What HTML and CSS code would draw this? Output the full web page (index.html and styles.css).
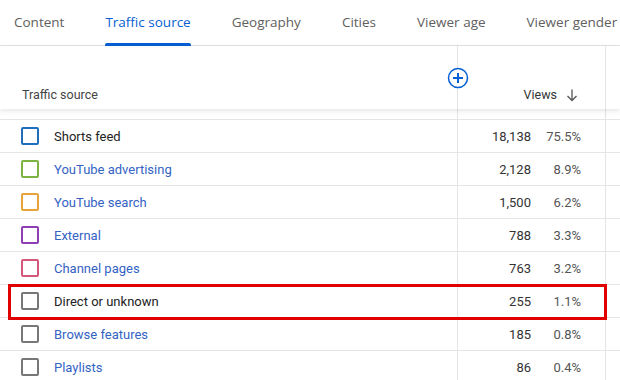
FILE: index.html
```html
<!DOCTYPE html>
<html lang="en">
<head>
    <meta charset="UTF-8">
    <meta name="viewport" content="width=device-width, initial-scale=1.0">
    <title>Traffic source</title>
    <link rel="stylesheet" href="styles.css">
</head>
<body>
    <div class="tabs">
        <div class="tab">Content</div>
        <div class="tab active">Traffic source</div>
        <div class="tab">Geography</div>
        <div class="tab">Cities</div>
        <div class="tab">Viewer age</div>
        <div class="tab">Viewer gender</div>
    </div>

    <div class="table">
        <div class="head">
            <div class="cell name-head">Traffic source</div>
            <div class="cell metric-head">
                <div class="add">
                    <svg width="22" height="22" viewBox="0 0 22 22">
                        <circle cx="11" cy="11" r="9.5" fill="#fff" stroke="#065fd4" stroke-width="1.5"/>
                        <path d="M11 6v10M6 11h10" stroke="#065fd4" stroke-width="2"/>
                    </svg>
                </div>
                <span class="views">Views</span>
                <svg class="sort" width="14" height="14" viewBox="0 0 14 14">
                    <path d="M7 1.5v11M2.5 8l4.5 4.5L11.5 8" fill="none" stroke="#555" stroke-width="1.3"/>
                </svg>
            </div>
            <div class="cell rest"></div>
        </div>
        <div class="spacer">
            <div class="cell"></div>
            <div class="cell"></div>
            <div class="cell rest"></div>
        </div>

        <div class="row">
            <div class="cell name"><span class="box" style="border-color:#1f6fc0"></span><span class="label plain">Shorts feed</span></div>
            <div class="cell metric"><span class="num">18,138</span><span class="pct">75.5%</span></div>
            <div class="cell rest"></div>
        </div>
        <div class="row">
            <div class="cell name"><span class="box" style="border-color:#7cb342"></span><span class="label">YouTube advertising</span></div>
            <div class="cell metric"><span class="num">2,128</span><span class="pct">8.9%</span></div>
            <div class="cell rest"></div>
        </div>
        <div class="row">
            <div class="cell name"><span class="box" style="border-color:#e8a33a"></span><span class="label">YouTube search</span></div>
            <div class="cell metric"><span class="num">1,500</span><span class="pct">6.2%</span></div>
            <div class="cell rest"></div>
        </div>
        <div class="row">
            <div class="cell name"><span class="box" style="border-color:#8e3fb3"></span><span class="label">External</span></div>
            <div class="cell metric"><span class="num">788</span><span class="pct">3.3%</span></div>
            <div class="cell rest"></div>
        </div>
        <div class="row">
            <div class="cell name"><span class="box" style="border-color:#d4587c"></span><span class="label">Channel pages</span></div>
            <div class="cell metric"><span class="num">763</span><span class="pct">3.2%</span></div>
            <div class="cell rest"></div>
        </div>
        <div class="row marked">
            <div class="cell name"><span class="box"></span><span class="label plain">Direct or unknown</span></div>
            <div class="cell metric"><span class="num">255</span><span class="pct">1.1%</span></div>
            <div class="cell rest"></div>
            <div class="highlight"></div>
        </div>
        <div class="row">
            <div class="cell name"><span class="box"></span><span class="label">Browse features</span></div>
            <div class="cell metric"><span class="num">185</span><span class="pct">0.8%</span></div>
            <div class="cell rest"></div>
        </div>
        <div class="row">
            <div class="cell name"><span class="box"></span><span class="label">Playlists</span></div>
            <div class="cell metric"><span class="num">86</span><span class="pct">0.4%</span></div>
            <div class="cell rest"></div>
        </div>
    </div>
</body>
</html>
```

FILE: styles.css
```css
body {
    margin: 0;
    background: #fff;
    font-family: Roboto, "Liberation Sans", Arial, sans-serif;
    overflow: hidden;
}

.tabs {
    display: flex;
    height: 46px;
    padding-left: 14px;
    gap: 41px;
    border-bottom: 1px solid #e3e3e3;
    box-sizing: border-box;
    white-space: nowrap;
}

.tab {
    position: relative;
    font-family: "Open Sans", "Noto Sans", sans-serif;
    font-size: 13.5px;
    color: #606060;
    line-height: 44px;
}

.tab.active {
    color: #065fd4;
}

.tab.active::after {
    content: "";
    position: absolute;
    left: 0;
    right: 0;
    bottom: -1px;
    height: 3px;
    background: #065fd4;
    border-radius: 2px 2px 0 0;
}

.head, .spacer, .row {
    display: grid;
    grid-template-columns: 458px 148px 1fr;
}

.cell {
    border-right: 1px solid #e5e5e5;
}

.cell.rest {
    border-right: none;
}

.head {
    height: 63px;
    position: relative;
    z-index: 1;
    box-shadow: 0 2px 5px rgba(0, 0, 0, 0.1);
    background: #fff;
}

.name-head {
    display: flex;
    align-items: flex-end;
    padding: 0 0 7px 22px;
    font-size: 12.5px;
    color: #444;
}

.metric-head {
    position: relative;
    display: flex;
    align-items: flex-end;
    justify-content: flex-end;
    padding: 0 26px 7px 0;
    font-size: 12.5px;
    color: #333;
}

.add {
    position: absolute;
    left: -11px;
    top: 21px;
    height: 22px;
}

.views {
    margin-right: 8px;
}

.spacer {
    height: 10px;
}

.row {
    position: relative;
    height: 33px;
    border-top: 1px solid #e5e5e5;
    box-sizing: border-box;
    font-size: 13px;
}

.name {
    display: flex;
    align-items: center;
    padding-left: 21px;
}

.box {
    width: 14px;
    height: 14px;
    border: 2px solid #777;
    border-radius: 2px;
    margin-right: 15px;
}

.label {
    color: #3463c4;
}

.label.plain {
    color: #222;
}

.metric {
    display: flex;
    align-items: center;
    justify-content: flex-end;
    padding-right: 24px;
}

.num {
    color: #333;
}

.pct {
    width: 50px;
    text-align: right;
    color: #555;
}

.highlight {
    position: absolute;
    z-index: 2;
    left: 8px;
    top: -1px;
    width: 593px;
    height: 30px;
    border: 3px solid #e00000;
}
```
